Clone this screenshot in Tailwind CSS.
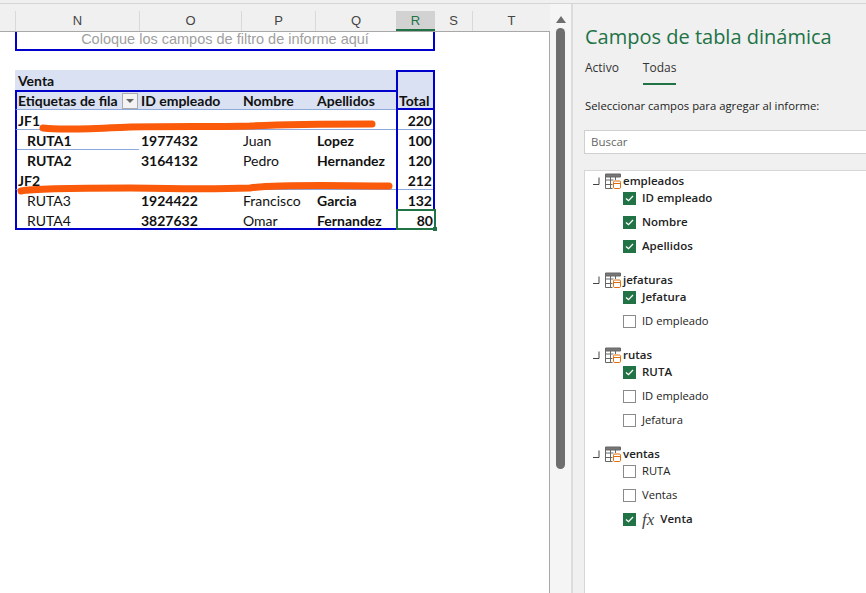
<!DOCTYPE html>
<html lang="es">
<head>
<meta charset="UTF-8">
<title>Campos de tabla dinámica</title>
<script src="https://cdn.jsdelivr.net/npm/@tailwindcss/browser@4"></script>
</head>
<body class="bg-[#f0f0f0] overflow-hidden">
<svg width="0" height="0" class="absolute">
  <defs>
    <symbol id="tbl" viewBox="0 0 30 17">
      <path d="M7 4.500v7h-6" stroke="#444" fill="none"/>
      <path d="M13.500 1h15v3h-15z" fill="#777" stroke="#666"/>
      <path d="M13.500 1v14.500h7M13.500 7h8M13.500 11.500h7M18.500 4v11.500M23.500 4v3" stroke="#666" fill="none"/>
      <rect x="21.500" y="8" width="7" height="7.500" rx="1.200" stroke="#e36c0a" fill="#fff"/>
      <path d="M21.500 10.500h7" stroke="#e36c0a" fill="none"/>
    </symbol>
    <symbol id="chk" viewBox="0 0 9 7">
      <path d="M1 3.500l2.500 2.200L8 1" stroke="#fff" stroke-width="1.300" fill="none"/>
    </symbol>
  </defs>
</svg>
<div class="w-[866px] h-[593px] flex flex-col overflow-hidden font-['Lato','Liberation_Sans',sans-serif] text-[#111]">
  <div class="h-[4px] shrink-0 border-b border-[#d4d4d4]"></div>
  <div class="flex flex-1 min-h-0">

    <!-- Sheet -->
    <div class="w-[550px] shrink-0 flex flex-col">
      <div class="h-[27px] shrink-0 pt-[7px] flex items-stretch pl-[15px] font-['Liberation_Sans',sans-serif] text-[13px] text-[#444] text-center">
        <div class="w-[124px] border-l border-[#d9d9d9] leading-[20px]">N</div>
        <div class="w-[102px] border-l border-[#d9d9d9] leading-[20px]">O</div>
        <div class="w-[74px] border-l border-[#d9d9d9] leading-[20px]">P</div>
        <div class="w-[81px] border-l border-[#d9d9d9] leading-[20px]">Q</div>
        <div class="w-[39px] bg-[#d2d2d2] border-b-2 border-[#217346] text-[#217346] leading-[20px]">R</div>
        <div class="w-[38px] border-r border-[#d9d9d9] leading-[20px]">S</div>
        <div class="w-[77px] leading-[20px]">T</div>
      </div>

      <div class="relative flex-1 bg-white border-t border-r border-[#a8a8a8] pl-[15px] text-[14px]">
        <!-- filter placeholder -->
        <div class="w-[420px] h-[19px] border-x-2 border-b-2 border-[#0000cc] font-['Liberation_Sans',sans-serif] text-[14.500px] leading-[15px] text-center text-[#a0a0a0] whitespace-nowrap">Coloque los campos de filtro de informe aquí</div>

        <!-- pivot table -->
        <div class="mt-[19px] w-[420px] grid grid-cols-[124px_102px_74px_81px_39px] auto-rows-[20px] leading-[22px] relative">
          <div class="col-span-4 bg-[#d9e1f2] font-bold pl-[3px]">Venta</div>
          <div class="bg-[#d9e1f2] border-x-2 border-t-2 border-[#0000cc]"></div>

          <div class="bg-[#d9e1f2] font-bold pl-[1px] border-l-2 border-t-2 border-[#0000cc] border-b border-b-[#8ea9db] flex items-center whitespace-nowrap">Etiquetas de fila<span class="ml-[4px] w-[16px] h-[16px] shrink-0 bg-[#f3f3f3] border border-[#ababab] flex items-center justify-center"><span class="w-0 h-0 border-x-[4px] border-x-transparent border-t-[4px] border-t-[#666]"></span></span></div>
          <div class="bg-[#d9e1f2] font-bold border-t-2 border-[#0000cc] border-b border-b-[#8ea9db] pl-[2px] leading-[17px]">ID empleado</div>
          <div class="bg-[#d9e1f2] font-bold border-t-2 border-[#0000cc] border-b border-b-[#8ea9db] pl-[2px] leading-[17px]">Nombre</div>
          <div class="bg-[#d9e1f2] font-bold border-t-2 border-[#0000cc] border-b border-b-[#8ea9db] pl-[2px] leading-[17px]">Apellidos</div>
          <div class="bg-[#d9e1f2] font-bold border-x-2 border-b-2 border-[#0000cc] pl-[1px]">Total</div>

          <div class="col-span-4 font-bold pl-[1px] border-l-2 border-l-[#0000cc] border-b border-b-[#8ea9db]">JF1</div>
          <div class="font-bold text-right pr-[1px] border-x-2 border-[#0000cc] border-b-0 shadow-[inset_0_-1px_0_#8ea9db]">220</div>

          <div class="font-bold pl-[10px] border-l-2 border-[#0000cc] shadow-[inset_0_-1px_0_#8ea9db]">RUTA1</div>
          <div class="font-bold pl-[2px]">1977432</div>
          <div class="pl-[2px]">Juan</div>
          <div class="font-bold pl-[2px]">Lopez</div>
          <div class="font-bold text-right pr-[1px] border-x-2 border-[#0000cc]">100</div>

          <div class="font-bold pl-[10px] border-l-2 border-[#0000cc]">RUTA2</div>
          <div class="font-bold pl-[2px]">3164132</div>
          <div class="pl-[2px]">Pedro</div>
          <div class="font-bold pl-[2px]">Hernandez</div>
          <div class="font-bold text-right pr-[1px] border-x-2 border-[#0000cc]">120</div>

          <div class="col-span-4 font-bold pl-[1px] border-l-2 border-l-[#0000cc] border-b border-b-[#8ea9db]">JF2</div>
          <div class="font-bold text-right pr-[1px] border-x-2 border-[#0000cc] shadow-[inset_0_-1px_0_#8ea9db]">212</div>

          <div class="pl-[10px] border-l-2 border-[#0000cc]">RUTA3</div>
          <div class="font-bold pl-[2px]">1924422</div>
          <div class="pl-[2px]">Francisco</div>
          <div class="font-bold pl-[2px]">Garcia</div>
          <div class="font-bold text-right pr-[1px] border-x-2 border-[#0000cc]">132</div>

          <div class="pl-[10px] border-l-2 border-b-2 border-[#0000cc]">RUTA4</div>
          <div class="font-bold pl-[2px] border-b-2 border-[#0000cc]">3827632</div>
          <div class="pl-[2px] border-b-2 border-[#0000cc]">Omar</div>
          <div class="font-bold pl-[2px] border-b-2 border-[#0000cc]">Fernandez</div>
          <div class="relative font-bold text-right pr-[1px] border-2 border-[#217346] -mt-[1px] w-[40px] h-[21px] leading-[20px]">80<span class="absolute -right-[3px] -bottom-[3px] w-[4px] h-[4px] bg-[#217346]"></span></div>
        </div>

        <!-- marker strokes drawn over the table -->
        <svg class="absolute left-0 top-0 pointer-events-none" width="549" height="240" fill="none" stroke="#fa5a0a" stroke-width="7" stroke-linecap="round" stroke-linejoin="round">
          <path d="M43 96 C60 98 80 97 130 95 C180 94 210 95 250 94 C290 92 330 92 372 92"/>
          <path d="M21 159 C30 157 70 156 130 156 C180 157 225 157 250 156 C280 152 340 154 389 154"/>
        </svg>
      </div>
    </div>

    <!-- Scrollbar -->
    <div class="w-[21px] shrink-0 bg-[#f5f5f5] flex flex-col items-center pt-[3px]">
      <div class="w-0 h-0 border-x-[5px] border-x-transparent border-b-[7px] border-b-[#6e6e6e] mt-[9px]"></div>
      <div class="mt-[5px] w-[9px] h-[441px] rounded-full bg-[#6e6e6e]"></div>
    </div>

    <!-- Pivot field pane -->
    <div class="flex-1 min-w-0 border-l-2 border-[#dcdcdc] pl-[11px] font-['Open_Sans','Liberation_Sans',sans-serif] flex flex-col">
      <h1 class="ml-px mt-[18px] text-[20px] leading-[30px] font-normal text-[#217346] whitespace-nowrap">Campos de tabla dinámica</h1>
      <div class="ml-px mt-[6px] flex gap-[24px] text-[12px] leading-[20px] text-[#333]">
        <span>Activo</span>
        <span class="border-b-2 border-[#217346] pb-[5px]">Todas</span>
      </div>
      <p class="ml-px mt-[12px] text-[11.300px] leading-[18px] text-[#222] whitespace-nowrap">Seleccionar campos para agregar al informe:</p>
      <div class="mt-[15px] h-[24px] bg-white border border-[#d0d0d0] border-r-0 pl-[6px] text-[11.500px] leading-[21px] text-[#666]">Buscar</div>

      <div class="mt-[16px] flex-1 bg-white border-t border-l border-[#d6d6d6] pl-[7px] pt-[5px] text-[11.500px] text-[#222]">
        <!-- empleados -->
        <div class="h-[10px] flex items-center gap-[1px] font-semibold"><svg width="30" height="17" class="shrink-0"><use href="#tbl"/></svg><span>empleados</span></div>
        <div class="h-6 flex items-center pl-[31px] gap-[6px] font-semibold"><span class="w-[13px] h-[13px] bg-[#217346] flex items-center justify-center shrink-0"><svg width="9" height="7"><use href="#chk"/></svg></span>ID empleado</div>
        <div class="h-6 flex items-center pl-[31px] gap-[6px] font-semibold"><span class="w-[13px] h-[13px] bg-[#217346] flex items-center justify-center shrink-0"><svg width="9" height="7"><use href="#chk"/></svg></span>Nombre</div>
        <div class="h-6 flex items-center pl-[31px] gap-[6px] font-semibold"><span class="w-[13px] h-[13px] bg-[#217346] flex items-center justify-center shrink-0"><svg width="9" height="7"><use href="#chk"/></svg></span>Apellidos</div>

        <!-- jefaturas -->
        <div class="mt-[17px] h-[10px] flex items-center gap-[1px] font-semibold"><svg width="30" height="17" class="shrink-0"><use href="#tbl"/></svg><span>jefaturas</span></div>
        <div class="h-6 flex items-center pl-[31px] gap-[6px] font-semibold"><span class="w-[13px] h-[13px] bg-[#217346] flex items-center justify-center shrink-0"><svg width="9" height="7"><use href="#chk"/></svg></span>Jefatura</div>
        <div class="h-6 flex items-center pl-[31px] gap-[6px] text-[11.200px]"><span class="w-[13px] h-[13px] border border-[#8a8a8a] bg-white shrink-0"></span>ID empleado</div>

        <!-- rutas -->
        <div class="mt-[17px] h-[10px] flex items-center gap-[1px] font-semibold"><svg width="30" height="17" class="shrink-0"><use href="#tbl"/></svg><span>rutas</span></div>
        <div class="h-6 flex items-center pl-[31px] gap-[6px] font-semibold"><span class="w-[13px] h-[13px] bg-[#217346] flex items-center justify-center shrink-0"><svg width="9" height="7"><use href="#chk"/></svg></span>RUTA</div>
        <div class="h-6 flex items-center pl-[31px] gap-[6px] text-[11.200px]"><span class="w-[13px] h-[13px] border border-[#8a8a8a] bg-white shrink-0"></span>ID empleado</div>
        <div class="h-6 flex items-center pl-[31px] gap-[6px] text-[11.200px]"><span class="w-[13px] h-[13px] border border-[#8a8a8a] bg-white shrink-0"></span>Jefatura</div>

        <!-- ventas -->
        <div class="mt-[17px] h-[10px] flex items-center gap-[1px] font-semibold"><svg width="30" height="17" class="shrink-0"><use href="#tbl"/></svg><span>ventas</span></div>
        <div class="h-6 flex items-center pl-[31px] gap-[6px] text-[11.200px]"><span class="w-[13px] h-[13px] border border-[#8a8a8a] bg-white shrink-0"></span>RUTA</div>
        <div class="h-6 flex items-center pl-[31px] gap-[6px] text-[11.200px]"><span class="w-[13px] h-[13px] border border-[#8a8a8a] bg-white shrink-0"></span>Ventas</div>
        <div class="h-6 flex items-center pl-[31px] gap-[6px] font-semibold"><span class="w-[13px] h-[13px] bg-[#217346] flex items-center justify-center shrink-0"><svg width="9" height="7"><use href="#chk"/></svg></span><span class="font-['Liberation_Serif',serif] italic font-normal text-[17px] leading-none text-[#444]">fx</span>Venta</div>
      </div>
    </div>

  </div>
</div>
</body>
</html>
